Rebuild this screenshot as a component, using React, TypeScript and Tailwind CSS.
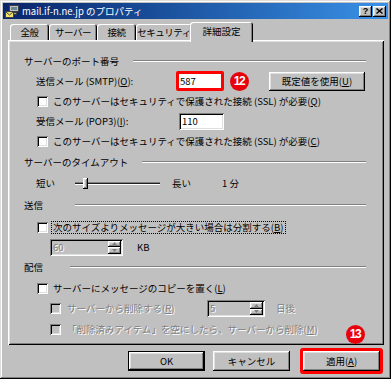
import React from 'react';

const raised =
  'shadow-[inset_-1px_-1px_#000,inset_1px_1px_#fff,inset_-2px_-2px_#808080,inset_2px_2px_#dfdfdf]';
const sunken =
  'shadow-[inset_1px_1px_#808080,inset_-1px_-1px_#fff,inset_2px_2px_#000,inset_-2px_-2px_#dfdfdf]';
const grayText = 'text-[#808080] [text-shadow:1px_1px_0_#fff]';

const U: React.FC<{ children: React.ReactNode }> = ({ children }) => (
  <span className="underline underline-offset-[1px]">{children}</span>
);

const Checkbox: React.FC<{ disabled?: boolean }> = ({ disabled }) => (
  <span
    className={`block w-[11px] h-[11px] shrink-0 ${disabled ? 'bg-[#c0c0c0]' : 'bg-white'} ${sunken}`}
  />
);

const Etched: React.FC<{ className?: string }> = ({ className }) => (
  <div className={`h-[2px] border-y border-t-[#808080] border-b-white ${className ?? ''}`} />
);

const GroupHeader: React.FC<{ label: string; lineW: string; h: string }> = ({ label, lineW, h }) => (
  <div className={`flex items-center justify-between ${h}`}>
    <span>{label}</span>
    <Etched className={lineW} />
  </div>
);

const Marker: React.FC<{ n: string; className?: string }> = ({ n, className }) => (
  <span
    className={`flex items-center justify-center w-[19px] h-[19px] rounded-full bg-[#e8000b] text-white text-[12px] font-bold tracking-[-1.5px] pr-[1px] font-['Liberation_Sans',sans-serif] ${className ?? ''}`}
  >
    {n}
  </span>
);

const SpinBox: React.FC<{ value: string; w: string }> = ({ value, w }) => (
  <div className={`flex items-stretch h-[17px] bg-[#c0c0c0] p-[2px] ${w} ${sunken}`}>
    <span className={`flex-1 flex items-center pl-[1px] ${grayText}`}>{value}</span>
    <div className="flex flex-col w-[13px]">
      <div className={`flex-1 flex items-center justify-center ${raised}`}>
        <svg width="5" height="3" viewBox="0 0 5 3"><path d="M2.5 0L5 3H0z" fill="#808080" /></svg>
      </div>
      <div className={`flex-1 flex items-center justify-center ${raised}`}>
        <svg width="5" height="3" viewBox="0 0 5 3"><path d="M0 0h5L2.5 3z" fill="#808080" /></svg>
      </div>
    </div>
  </div>
);

const tabShadow = 'shadow-[inset_1px_1px_#fff,inset_-1px_0_#000,inset_-2px_0_#808080]';

export default function App() {
  const tabs = [
    { label: '全般', w: 'w-[39px]' },
    { label: 'サーバー', w: 'w-[48px]' },
    { label: '接続', w: 'w-[39px]' },
    { label: 'セキュリティ', w: 'w-[56px]' },
  ];

  return (
    <div className="w-[392px] h-[380px] bg-white text-black text-[9.5px] leading-[11px] font-['Noto_Sans_CJK_JP',sans-serif]">
      <div className="flex flex-col w-[391px] h-[379px] bg-[#c0c0c0] p-[3px] shadow-[inset_-1px_-1px_#000,inset_1px_1px_#dfdfdf,inset_-2px_-2px_#808080,inset_2px_2px_#fff]">
        {/* title bar */}
        <div className="flex items-center h-[16px] px-[2px] bg-linear-to-r from-[#0a246a] to-[#3a92e8]">
          <svg width="14" height="13" viewBox="0 0 14 13" className="shrink-0">
            <rect x="4.5" y="0.5" width="9" height="6" fill="#c0c0c0" stroke="#404040" />
            <rect x="6" y="2" width="6" height="3" fill="#6a8a9a" />
            <rect x="3.5" y="7.5" width="8" height="2" fill="#a0a0a0" stroke="#404040" />
            <rect x="0.5" y="6.5" width="8" height="6" fill="#f4e46a" stroke="#404040" />
            <path d="M0.5 6.5L4.5 10L8.5 6.5" fill="none" stroke="#404040" />
          </svg>
          <span className="ml-[3px] text-white">mail.if-n.ne.jp のプロパティ</span>
          <div className="ml-auto flex gap-[1px]">
            <span className={`flex items-center justify-center w-[13px] h-[11px] bg-[#c0c0c0] text-[9px] font-bold font-['Liberation_Sans',sans-serif] ${raised}`}>
              ?
            </span>
            <span className={`flex items-center justify-center w-[13px] h-[11px] bg-[#c0c0c0] ${raised}`}>
              <svg width="7" height="6" viewBox="0 0 7 6">
                <path d="M0.5 0.5L6.5 5.5M6.5 0.5L0.5 5.5" stroke="#000" strokeWidth="1.4" />
              </svg>
            </span>
          </div>
        </div>

        {/* tabs */}
        <div className="relative z-10 mt-[3px] flex items-end h-[18px] pl-[7px]">
          {tabs.map((t) => (
            <div
              key={t.label}
              className={`flex items-center justify-center h-[16px] rounded-t-[3px] whitespace-nowrap tracking-[-0.5px] ${t.w} ${tabShadow}`}
            >
              {t.label}
            </div>
          ))}
          <div
            className={`flex items-center justify-center h-[20px] w-[63px] -ml-[2px] -mb-[2px] pb-[2px] bg-[#c0c0c0] rounded-t-[3px] whitespace-nowrap ${tabShadow}`}
          >
            詳細設定
          </div>
        </div>

        {/* panel */}
        <div
          className={`relative ml-[5px] w-[376px] pl-[16px] pr-[18px] pt-[11px] pb-[5px] shadow-[inset_1px_1px_#fff,inset_-1px_-1px_#000,inset_2px_2px_#dfdfdf,inset_-2px_-2px_#808080]`}
        >
          <GroupHeader label="サーバーのポート番号" lineW="w-[233px]" h="h-[20px]" />

          <div className="flex items-center h-[20px] pl-[12px]">
            <span className="w-[140px]">
              送信メール (SMTP)(<U>O</U>):
            </span>
            <div className="flex items-center w-[48px] h-[20px] border-[3px] border-[#ff0000] rounded-[2px] bg-white pl-[1px]">
              587
            </div>
            <Marker n="12" className="ml-[6px]" />
            <button
              className={`ml-[20px] w-[96px] h-[19px] flex items-center justify-center bg-[#c0c0c0] ${raised}`}
            >
              既定値を使用(<U>U</U>)
            </button>
          </div>

          <div className="flex items-center h-[20px] pl-[13px]">
            <Checkbox />
            <span className="ml-[5px]">
              このサーバーはセキュリティで保護された接続 (SSL) が必要(<U>Q</U>)
            </span>
          </div>

          <div className="flex items-center h-[20px] pl-[12px]">
            <span className="w-[143px]">
              受信メール (POP3)(<U>I</U>):
            </span>
            <div className={`flex items-center w-[45px] h-[17px] bg-white pl-[3px] ${sunken}`}>110</div>
          </div>

          <div className="flex items-center h-[20px] pl-[13px]">
            <Checkbox />
            <span className="ml-[5px]">
              このサーバーはセキュリティで保護された接続 (SSL) が必要(<U>C</U>)
            </span>
          </div>

          <GroupHeader label="サーバーのタイムアウト" lineW="w-[224px]" h="h-[22px]" />

          <div className="flex items-center h-[21px] pl-[12px]">
            <span className="w-[39px]">短い</span>
            <div className="relative w-[85px] h-[11px] flex items-center">
              <div className="w-full h-[3px] border-t border-t-[#808080] border-b border-b-white bg-[#202020]" />
              <div className={`absolute left-[8px] top-0 w-[5px] h-[11px] bg-[#c0c0c0] ${raised}`} />
            </div>
            <span className="ml-[12px] w-[50px]">長い</span>
            <span>1 分</span>
          </div>

          <GroupHeader label="送信" lineW="w-[291px]" h="h-[22px]" />

          <div className="flex items-center h-[22px] pl-[13px]">
            <Checkbox />
            <span className="ml-[4px] px-[1px] outline-1 outline-dotted outline-black">
              次のサイズよりメッセージが大きい場合は分割する(<U>B</U>)
            </span>
          </div>

          <div className="flex items-center h-[18px] pl-[26px]">
            <SpinBox value="60" w="w-[73px]" />
            <span className="ml-[14px]">KB</span>
          </div>

          <GroupHeader label="配信" lineW="w-[296px]" h="h-[22px]" />

          <div className="flex items-center h-[20px] pl-[13px]">
            <Checkbox />
            <span className="ml-[5px]">
              サーバーにメッセージのコピーを置く(<U>L</U>)
            </span>
          </div>

          <div className="flex items-center h-[21px] pl-[26px]">
            <Checkbox disabled />
            <span className={`ml-[6px] w-[140px] ${grayText}`}>
              サーバーから削除する(<U>R</U>)
            </span>
            <SpinBox value="5" w="w-[58px]" />
            <span className={`ml-[11px] ${grayText}`}>日後</span>
          </div>

          <div className="flex items-center h-[21px] pl-[26px]">
            <Checkbox disabled />
            <span className={`ml-[6px] ${grayText}`}>
              「削除済みアイテム」を空にしたら、サーバーから削除(<U>M</U>)
            </span>
          </div>

          <Marker n="13" className="absolute left-[338px] top-[285px]" />
        </div>

        {/* buttons */}
        <div className="flex items-center h-[26px] mt-[3px] pl-[125px]">
          <button
            className={`w-[77px] h-[20px] flex items-center justify-center bg-[#c0c0c0] border border-black ${raised}`}
          >
            OK
          </button>
          <button
            className={`ml-[8px] w-[77px] h-[20px] flex items-center justify-center bg-[#c0c0c0] ${raised}`}
          >
            キャンセル
          </button>
          <div className="ml-[10px] border-[3px] border-[#ff0000] rounded-[3px]">
            <button
              className={`w-[77px] h-[20px] flex items-center justify-center bg-[#c0c0c0] ${raised}`}
            >
              適用(<U>A</U>)
            </button>
          </div>
        </div>
      </div>
    </div>
  );
}
